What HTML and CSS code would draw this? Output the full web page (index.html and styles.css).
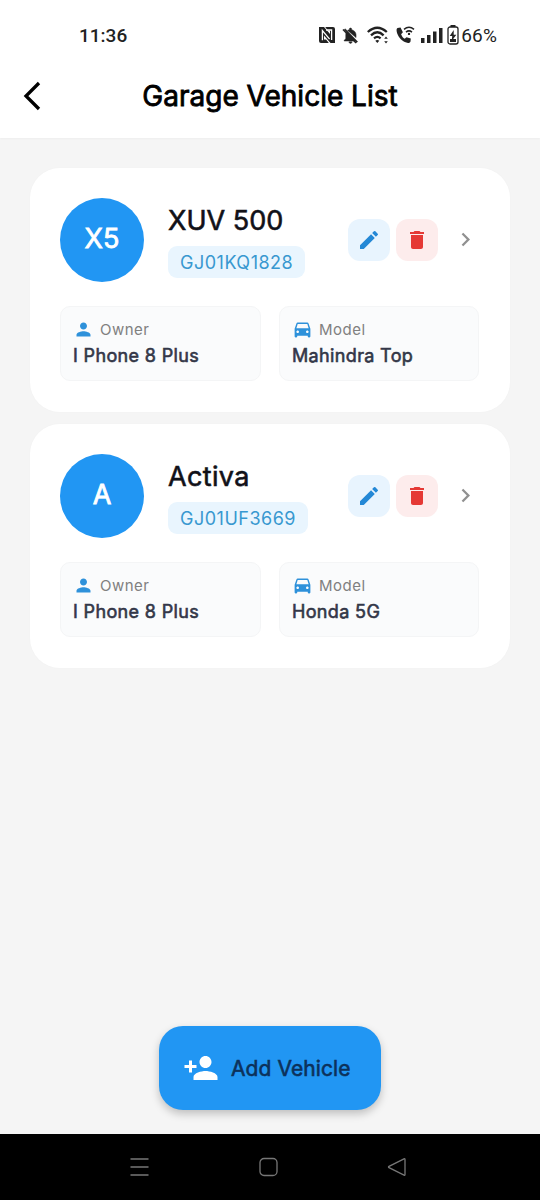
FILE: index.html
```html
<!DOCTYPE html>
<html lang="en">
<head>
<meta charset="utf-8">
<title>Garage Vehicle List</title>
<link rel="stylesheet" href="styles.css">
</head>
<body>
<svg class="symbols" aria-hidden="true">
  <symbol id="edit" viewBox="0 0 24 24"><path d="M3 17.25V21h3.75L17.81 9.94l-3.75-3.75zM20.71 7.04a1 1 0 0 0 0-1.41l-2.34-2.34a1 1 0 0 0-1.41 0l-1.83 1.83 3.75 3.75z"/></symbol>
  <symbol id="trash" viewBox="0 0 24 24"><path d="M6 19c0 1.100.9 2 2 2h8c1.100 0 2-.9 2-2V7H6zM19 4h-3.500l-1-1h-5l-1 1H5v2h14z"/></symbol>
  <symbol id="chevron" viewBox="0 0 24 24"><path d="M10 6 8.590 7.410 13.170 12l-4.580 4.590L10 18l6-6z"/></symbol>
  <symbol id="person" viewBox="0 0 24 24"><path d="M12 12c2.210 0 4-1.790 4-4s-1.790-4-4-4-4 1.790-4 4 1.790 4 4 4zm0 2c-2.670 0-8 1.340-8 4v2h16v-2c0-2.660-5.330-4-8-4z"/></symbol>
  <symbol id="car" viewBox="0 0 24 24"><path d="M18.920 5.010C18.720 4.420 18.160 4 17.500 4h-11c-.66 0-1.210.42-1.420 1.010L3 11v9c0 .55.45 1 1 1h1c.55 0 1-.45 1-1v-1h12v1c0 .55.45 1 1 1h1c.55 0 1-.45 1-1v-9zM6.500 16c-.83 0-1.500-.67-1.500-1.500S5.670 13 6.500 13s1.500.67 1.500 1.500S7.330 16 6.500 16zm11 0c-.83 0-1.500-.67-1.500-1.500s.67-1.500 1.500-1.500 1.500.67 1.500 1.500-.67 1.500-1.500 1.500zM5 10.500l1.500-4.800h11L19 10.500z"/></symbol>
</svg>
<div class="screen">
  <div class="status">
    <span class="clock">11:36</span>
    <div class="indicators">
      <svg class="nfc" width="16" height="16" viewBox="0 0 16 16"><path fill="#222" d="M0 0h5l6 7V3.500H9L6.500.5V0H14a2 2 0 0 1 2 2v14h-4.500L5 8.500v4h2L9.500 15.500V16H2a2 2 0 0 1-2-2z"/><path fill="none" stroke="#fff" stroke-width="1.300" d="M3.400 13.200V3.600l7.200 8.600M7 3h5.600v10"/></svg>
      <svg class="bell" width="19" height="19" viewBox="0 0 24 24"><path fill="#222" stroke="#222" stroke-width=".6" d="M20 18.690 7.840 6.140 5.270 3.490 4 4.760l2.800 2.800v.01c-.52.990-.8 2.160-.8 3.420v5l-2 2v1h13.730l2 2L21 19.720zM12 22c1.110 0 2-.89 2-2h-4c0 1.110.89 2 2 2zm7-7.320V11c0-3.080-2.640-5.640-5.500-6.320V4c0-.83-.67-1.500-1.500-1.500s-1.500.67-1.500 1.500v.68c-.9.200-1.500.5-2.200.9z"/><path d="M2.500 4.500 19 21.500" stroke="#222" stroke-width="1.800"/></svg>
      <svg class="wifi" width="22" height="18" viewBox="0 0 22 18"><g fill="none" stroke="#222" stroke-width="2.300"><path d="M.8 6Q10.300 -2.500 19.800 6M4 9.300Q10.300 3.300 16.600 9.300M7 12.300Q10.300 9.500 13.600 12.300"/></g><path fill="#222" d="m10.300 17-2-2.200q2-1.600 4 0zM19 10.500l1.800 2.300h-3.600zm0 7-1.800-2.300h3.600z"/></svg>
      <svg class="call" width="19" height="18" viewBox="0 0 19 18"><path fill="#222" d="M4.500 1.500 1.500 2C0 2.800.5 6 2 9.300c2 3.900 5.500 7.100 10 7.600 1.500 0 2.300-.6 2.500-1.500l.3-3-4.300-1.200-1.800 1.600C7 12 5.800 10 5.100 8.200l1.800-2z"/><g fill="none" stroke="#222" stroke-width="1.500"><path d="M8 3.400q5-4.200 10 0M10 6.100q3-2.500 6 0"/></g><circle cx="13" cy="7.900" r="1.200" fill="#222"/></svg>
      <svg class="signal" width="22" height="16" viewBox="0 0 22 16" fill="#222"><path d="M0 11h3.500v5H0zM6 8h3.500v8H6zM12 4.500h3.500V16H12zM18 1h3.500v15H18z"/></svg>
      <svg class="battery" width="12" height="20" viewBox="0 0 12 20"><path fill="#222" d="M3.500 0h5v2h-5z"/><rect x="1" y="2" width="10" height="17" rx="2" fill="#fff" stroke="#222" stroke-width="1.300"/><path fill="#222" d="M6.700 5 2.700 11h2.500L4.700 16 9.300 9.700H6.700z"/><path fill="#222" d="M3 14h6v3H3z"/></svg>
      <span class="percent">66%</span>
    </div>
  </div>
  <header class="header">
    <svg class="back" width="20" height="30" viewBox="0 0 20 30"><path d="M17 2 4 15l13 13" fill="none" stroke="#000" stroke-width="3.300"/></svg>
    <h1 class="title">Garage Vehicle List</h1>
  </header>
  <main class="list">
    <article class="card">
      <div class="summary">
        <div class="avatar">X5</div>
        <div class="identity"><h2 class="name">XUV 500</h2><span class="plate">GJ01KQ1828</span></div>
        <div class="actions">
          <span class="action edit"><svg><use href="#edit"/></svg></span>
          <span class="action delete"><svg><use href="#trash"/></svg></span>
          <svg class="chevron"><use href="#chevron"/></svg>
        </div>
      </div>
      <div class="details">
        <div class="detail"><div class="label"><svg><use href="#person"/></svg>Owner</div><div class="value">I Phone 8 Plus</div></div>
        <div class="detail"><div class="label"><svg><use href="#car"/></svg>Model</div><div class="value">Mahindra Top</div></div>
      </div>
    </article>
    <article class="card">
      <div class="summary">
        <div class="avatar">A</div>
        <div class="identity"><h2 class="name name-spaced">Activa</h2><span class="plate">GJ01UF3669</span></div>
        <div class="actions">
          <span class="action edit"><svg><use href="#edit"/></svg></span>
          <span class="action delete"><svg><use href="#trash"/></svg></span>
          <svg class="chevron"><use href="#chevron"/></svg>
        </div>
      </div>
      <div class="details">
        <div class="detail"><div class="label"><svg><use href="#person"/></svg>Owner</div><div class="value">I Phone 8 Plus</div></div>
        <div class="detail"><div class="label"><svg><use href="#car"/></svg>Model</div><div class="value">Honda 5G</div></div>
      </div>
    </article>
  </main>
  <div class="footer">
    <div class="add"><svg width="36" height="36" viewBox="0 0 24 24"><path fill="#fff" d="M15 12c2.210 0 4-1.790 4-4s-1.790-4-4-4-4 1.790-4 4 1.790 4 4 4zm-9-2V7H4v3H1v2h3v3h2v-3h3v-2zm9 4c-2.670 0-8 1.340-8 4v2h16v-2c0-2.660-5.330-4-8-4z"/></svg><span>Add Vehicle</span></div>
  </div>
  <nav class="nav">
    <svg width="20" height="20" viewBox="0 0 20 20"><path d="M.5 2h18M.5 10h18M.5 18h18"/></svg>
    <svg width="20" height="20" viewBox="0 0 20 20"><rect x="1" y="1.500" width="17" height="17" rx="4"/></svg>
    <svg width="20" height="20" viewBox="0 0 20 20"><path d="M17 1.800 2 9.300q-1 .7 0 1.400l15 7.500q1 .3 1-.8V2.600q0-1.100-1-.8z"/></svg>
  </nav>
</div>
</body>
</html>
```
FILE: styles.css
```css
* { box-sizing: border-box; }
body { margin: 0; font-family: Inter, sans-serif; background: #f5f5f5; }
h1, h2 { margin: 0; font-weight: 400; }
svg { display: block; flex: none; }
.symbols { display: none; }
.screen { height: 1200px; display: flex; flex-direction: column; }
.status { height: 70px; background: #fff; padding: 0 43px 0 79px; display: flex; align-items: center; justify-content: space-between; color: #222; }
.clock { font: 500 19px/24px Roboto, sans-serif; padding-top: 2px; }
.indicators { display: flex; align-items: center; }
.nfc { margin-right: 6px; }
.bell { margin-right: 7px; }
.wifi { margin-right: 7px; }
.call { margin-right: 6px; }
.signal { margin-right: 4px; }
.percent { font: 400 19px/24px Roboto, sans-serif; letter-spacing: .2px; margin-left: 2px; padding-top: 2px; }
.header { height: 68px; background: #fff; display: flex; align-items: center; padding: 0 20px 16px 22px; box-shadow: 0 1px 2px rgba(0, 0, 0, .03); }
.title { flex: 1; margin-right: 22px; text-align: center; font-size: 28px; line-height: 34px; color: #000; -webkit-text-stroke: .8px; }
.list { flex: 1; padding: 30px 30px 0; display: flex; flex-direction: column; gap: 12px; }
.card { height: 244px; background: #fff; border-radius: 30px; padding: 29.5px 31px 30px 30px; display: flex; flex-direction: column; gap: 24.5px; box-shadow: 0 0 3px rgba(0, 0, 0, .02); }
.summary { height: 84px; display: flex; align-items: center; }
.avatar { width: 84px; height: 84px; border-radius: 50%; background: #2196f3; color: #fff; display: flex; align-items: center; justify-content: center; padding-bottom: 2px; font-size: 27px; -webkit-text-stroke: .8px; }
.identity { margin-left: 24px; flex: 1; display: flex; flex-direction: column; align-items: flex-start; gap: 8px; padding-top: 3px; }
.name { font-size: 27px; line-height: 34px; color: #111118; -webkit-text-stroke: .6px; }
.name-spaced { letter-spacing: .35px; }
.plate { height: 32px; padding: 0 12px; border-radius: 9px; background: #e9f5fe; color: #3898d0; font-size: 18px; line-height: 33px; letter-spacing: .5px; }
.actions { display: flex; align-items: center; gap: 6px; }
.action { width: 42px; height: 42px; border-radius: 12px; display: flex; align-items: center; justify-content: center; }
.action svg { width: 24px; height: 24px; }
.edit { background: #e8f4fe; fill: #2488d6; }
.delete { background: #fdecec; fill: #e53935; }
.chevron { width: 27px; height: 27px; fill: #909090; margin: 0 0 0 8px; }
.details { height: 75px; display: grid; grid-template-columns: 201px 200px; justify-content: space-between; }
.detail { border: 1px solid #f4f5f6; border-radius: 10px; background: #fafbfc; padding: 12px 12px; }
.label { display: flex; align-items: center; height: 20px; font-size: 15px; color: #808080; letter-spacing: .5px; gap: 6px; }
.label svg { width: 21px; height: 21px; fill: #2e91da; }
.value { font-size: 18px; line-height: 24px; margin-top: 5px; color: #333748; letter-spacing: .35px; -webkit-text-stroke: .6px; white-space: nowrap; }
.footer { height: 108px; display: flex; justify-content: center; }
.add { width: 222px; height: 84px; border-radius: 24px; background: #2196f3; box-shadow: 0 4px 8px rgba(0, 0, 0, .22); display: flex; align-items: center; padding-left: 24px; gap: 12px; color: #0c315b; font-size: 21px; -webkit-text-stroke: .6px; white-space: nowrap; letter-spacing: .08px; }
.nav { height: 66px; background: #000; display: flex; align-items: center; justify-content: space-between; padding: 0 133px 0 130px; fill: none; stroke: #777; stroke-width: 1.3; }
```
